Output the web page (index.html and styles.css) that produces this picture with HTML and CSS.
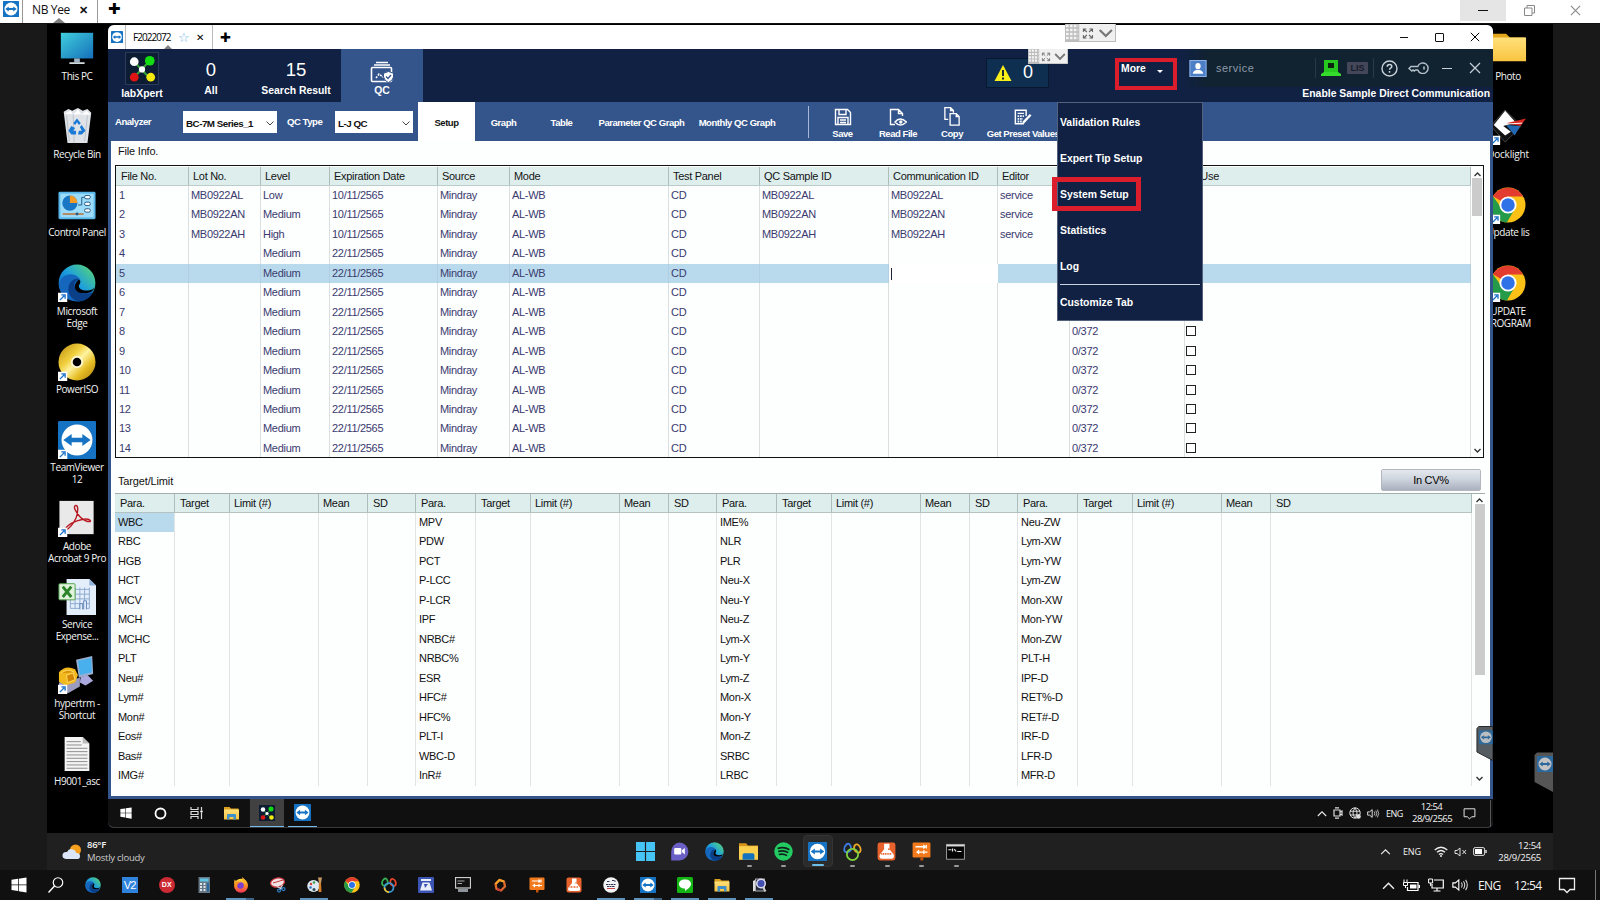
FILE: index.html
```html
<!DOCTYPE html>
<html lang="en">
<head>
<meta charset="utf-8">
<title>NB Yee</title>
<link rel="stylesheet" href="styles.css">
</head>
<body>
<svg class="defs" width="0" height="0">
  <defs>
    <linearGradient id="gEdge" x1="0" y1="1" x2="1" y2="0"><stop offset="0" stop-color="#0c50a8"/><stop offset=".5" stop-color="#1b9de0"/><stop offset="1" stop-color="#5fdc6a"/></linearGradient>
    <linearGradient id="gPc" x1="0" y1="0" x2="1" y2="1"><stop offset="0" stop-color="#40cfdc"/><stop offset="1" stop-color="#156fba"/></linearGradient>
    <linearGradient id="gFolder" x1="0" y1="0" x2="0" y2="1"><stop offset="0" stop-color="#ffe07a"/><stop offset="1" stop-color="#f9c440"/></linearGradient>
    <linearGradient id="gDisc" x1="0" y1="0" x2="1" y2="1"><stop offset="0" stop-color="#b98b12"/><stop offset=".35" stop-color="#f0cf3c"/><stop offset=".5" stop-color="#fff3a0"/><stop offset=".7" stop-color="#e6bd25"/><stop offset="1" stop-color="#a97c0c"/></linearGradient>
    <linearGradient id="gFire" x1="0" y1="0" x2="0" y2="1"><stop offset="0" stop-color="#ffdf3a"/><stop offset=".5" stop-color="#ff8a26"/><stop offset="1" stop-color="#f0305a"/></linearGradient>
  </defs>
  <symbol id="tv" viewBox="0 0 32 32"><rect width="32" height="32" rx="1" fill="#1673c4"/><circle cx="16" cy="16" r="13" fill="#fff"/><path d="M4.500 16l7-5v3.200h9V11l7 5-7 5v-3.200h-9V21z" fill="#1673c4"/></symbol>
  <symbol id="edge" viewBox="0 0 32 32"><circle cx="16" cy="16" r="15.500" fill="url(#gEdge)"/><path d="M1 17C2 8 13 6 18 12c1.500 2 .5 4-.5 5-2 3 2 6 6.500 6 3 0 5-.8 6-1.500C27 28 21 32 15 31 6 31 1 25 1 17z" fill="#1467bd"/><path d="M11 15c-5 6-1 15 6 16.500 5 .5 10-3 12.500-8C24 27 12 24 14 16c.7-2 2.500-3 4-3-2-1-5-.5-7 2z" fill="#0b3f88"/><path d="M17.500 13c3 2 0 4 0 6 1 4 8 4 12 2l1-1c-1 4-6 5-10 4.500-6-.5-9-6-3-11.500z" fill="#000"/></symbol>
  <symbol id="chrome" viewBox="0 0 32 32"><circle cx="16" cy="16" r="15.500" fill="#fbc116"/><path d="M16 16L2.600 8.200A15.500 15.500 0 0 1 29.400 8.500H16z" fill="#e33b2e"/><path d="M16 16l-5.500 3L2.600 8.200A15.500 15.500 0 0 0 15 31.500l7-12z" fill="#259a48"/><circle cx="16" cy="16" r="7.600" fill="#fff"/><circle cx="16" cy="16" r="6" fill="#2f72e8"/></symbol>
  <symbol id="lab" viewBox="0 0 32 32"><rect width="32" height="32" fill="#0c1c33"/><path d="M8 9l15 16M24 8L8 25" stroke="#3aa23a" stroke-width="2"/><circle cx="8" cy="9" r="4.500" fill="#fff"/><circle cx="24" cy="8" r="5" fill="#12dc12"/><circle cx="8" cy="25" r="4.500" fill="#e01414"/><circle cx="25" cy="25" r="4.500" fill="#f4ea0c"/><circle cx="16" cy="17" r="3.200" fill="#fff"/></symbol>
  <symbol id="folder" viewBox="0 0 32 32"><path d="M1 4h11l3 3h15v5H1z" fill="#d9a021"/><path d="M1 9h30v20H1z" fill="url(#gFolder)"/><path d="M7 29v-9q0-2 2-2h14q2 0 2 2v9h-5v-5h-8v5z" fill="#3f8fc8"/></symbol>
  <symbol id="win10" viewBox="0 0 32 32"><path d="M1 5.500L14 3.700V15H1zM15.500 3.500L31 1v14H15.500zM1 16.500h13v11.300L1 26zM15.500 16.500H31V31l-15.500-2.300z" fill="#fff"/></symbol>
  <symbol id="arrow" viewBox="0 0 10 10"><rect width="10" height="10" fill="#fff"/><path d="M2 8l4.500-4.500M3.500 2.500h4v4" stroke="#1b70c8" stroke-width="1.400" fill="none"/></symbol>
  <symbol id="flask" viewBox="0 0 32 32"><rect x="1" y="1" width="30" height="30" rx="4" fill="#e8622c"/><path d="M12 3h9v9l7 9q2 7-4 7H9q-7 0-4-7l7-9z" fill="#fff"/><path d="M7 20h18" stroke="#e8622c" stroke-width="3" stroke-dasharray="2 1"/><circle cx="20" cy="12" r="1.500" fill="#e8622c"/></symbol>
  <symbol id="sign" viewBox="0 0 32 32"><rect x="1" y="1" width="30" height="25" rx="2" fill="#f27a1c"/><path d="M14 26h5v5h-5z" fill="#c65008"/><path d="M6 8h16l-3-3m3 3l-3 3M26 17H9l3-3m-3 3l3 3M24 5v6M20 14v6" stroke="#fff" stroke-width="2.200" fill="none"/></symbol>
  <symbol id="loops" viewBox="0 0 32 32"><g fill="none" stroke-width="3"><path d="M13 14C8 19 2 18 2 12S8 1 11 4s3 6 2 10z" stroke="#3c7be0"/><path d="M19 13c-1-6 1-10 5-9s7 8 5 12-8 1-10-3z" stroke="#f1a82a"/><circle cx="16" cy="21" r="9.500" stroke="#7ed23e"/></g></symbol>
  <symbol id="speaker" viewBox="0 0 20 16"><path d="M1 5.500h3L8 2v12l-4-3.500H1z" fill="none" stroke="#fff" stroke-width="1.300"/><path d="M11 5q2 3 0 6M13.500 3.500q3 4.500 0 9M16 2q4 6 0 12" fill="none" stroke="#ddd" stroke-width="1.200"/></symbol>
  <symbol id="chev" viewBox="0 0 12 8"><path d="M1 7l5-5 5 5" fill="none" stroke="#eee" stroke-width="1.300"/></symbol>
  <symbol id="note" viewBox="0 0 18 18"><path d="M1.500 2.500h15v11H12L9 16.500l-3-3H1.500z" fill="none" stroke="#eee" stroke-width="1.300"/></symbol>
  <symbol id="x" viewBox="0 0 12 12"><path d="M1 1l10 10M11 1L1 11" fill="none" stroke="currentColor" stroke-width="1.200"/></symbol>
  <symbol id="grip" viewBox="0 0 50 18"><rect width="50" height="18" fill="#f0f0f0"/><path d="M0 17.500h50M49.500 0v18" stroke="#bbb"/><rect width="14" height="18" fill="#bcbcbc"/><path d="M1 2h12M1 6h12M1 10h12M1 14h12" stroke="#f4f4f4" stroke-width="2.600" stroke-dasharray="2.600 1.200"/><path d="M18 8V5h3M18 5l3.500 3M27 8V5h-3M27 5l-3.500 3M18 11v3h3M18 14l3.500-3M27 11v3h-3M27 14l-3.500-3" fill="none" stroke="#666"/><path d="M34 6l6 6 6-6" fill="none" stroke="#777" stroke-width="2.200"/></symbol>
</svg>

<header class="top">
  <svg class="top-logo"><use href="#tv"/></svg>
  <div class="top-tab"><span>NB Yee</span><b>✕</b></div>
  <b class="plus">✚</b>
  <div class="top-controls">
    <div class="ctl ctl-hot"><i class="dash"></i></div>
    <div class="ctl"><svg width="11" height="11" viewBox="0 0 11 11"><path d="M.5 3h7.500v7.500H.5zM3 3V.5h7.500V8H8" fill="none" stroke="#888"/></svg></div>
    <div class="ctl"><svg width="11" height="11"><use href="#x"/></svg></div>
  </div>
</header>

<main class="desktop">
  <section class="shortcuts left">
    <div class="sc"><svg viewBox="0 0 40 40"><rect x="3" y="4" width="34" height="27" fill="url(#gPc)"/><path d="M17 31h6v4h-6z" fill="#9fb4c4"/><path d="M12 35h16v1.800H12z" fill="#dbe4ea"/></svg><span>This PC</span></div>
    <div class="sc"><svg viewBox="0 0 40 40"><path d="M6 5l5-3 4 2 6-3 5 3 5-2 4 4-4 32H10z" fill="#dfe3e8"/><path d="M7 7l6-3 3 4 5-5 4 5 5-4 4 4z" fill="#fff"/><path d="M9 9l3 27M31 9l-3 27M16 8l1 30" stroke="#b9c1ca"/><path d="M16 17l4-5 4 5-2 2-2-3-2 3zM25 19l4 6-4 4h-4l1-4h3l-2-4zM14 20l-3 5 3 4h5v-4h-3l2-3z" fill="#1b7ad6"/></svg><span>Recycle Bin</span></div>
    <div class="sc"><svg viewBox="0 0 40 40"><rect x=".5" y="6" width="39" height="29" rx="1.500" fill="#58b6e8"/><rect x="2.500" y="8" width="35" height="25" fill="#9cdcf8"/><circle cx="12.500" cy="18" r="8" fill="#1976c4"/><path d="M12.500 18v-8a8 8 0 0 1 8 8z" fill="#f49b26"/><path d="M21 20h4v-8h4" stroke="#245a84" fill="none"/><g fill="#fff" stroke="#245a84"><rect x="28" y="10" width="6" height="3.500" rx="1.500"/><rect x="28" y="17" width="6" height="3.500" rx="1.500"/><rect x="28" y="24" width="6" height="3.500" rx="1.500"/></g><path d="M5 29.500h22" stroke="#b96d2a" stroke-width="1.500"/><circle cx="20" cy="29.500" r="1.500" fill="#245a84"/></svg><span>Control Panel</span></div>
    <div class="sc"><svg viewBox="0 0 40 40"><use href="#edge" width="40" height="40"/><use href="#arrow" y="30" width="10" height="10"/></svg><span>Microsoft<br>Edge</span></div>
    <div class="sc"><svg viewBox="0 0 40 40"><circle cx="20" cy="20" r="19.500" fill="url(#gDisc)"/><circle cx="20" cy="20" r="6.500" fill="#fff8d0"/><circle cx="20" cy="20" r="4.500" fill="#000"/><use href="#arrow" y="30" width="10" height="10"/></svg><span>PowerISO</span></div>
    <div class="sc"><svg viewBox="0 0 40 40"><use href="#tv" width="40" height="40"/><use href="#arrow" y="30" width="10" height="10"/></svg><span>TeamViewer<br>12</span></div>
    <div class="sc"><svg viewBox="0 0 40 40"><rect x="1.500" y="2" width="36" height="35" fill="#e9e9e9"/><path d="M18 7c4-2 3 8 1 13-3 6-7 11-10 12-3 0 2-6 11-9s13-2 14 0-9 1-15-10c-2-3-2-5-1-6z" fill="none" stroke="#b81922" stroke-width="1.500"/><use href="#arrow" y="30" width="10" height="10"/></svg><span>Adobe<br>Acrobat 9 Pro</span></div>
    <div class="sc"><svg viewBox="0 0 40 40"><path d="M9 1h24l7 7v31H9z" fill="#e4eefb"/><path d="M33 1l7 7h-7z" fill="#8fb0d8"/><path d="M13 12h20M13 17h20M13 22h20M13 27h20M13 32h20M13 10v22M18 10v22M23 10v22M28 10v22M33 10v22" stroke="#8aa9cf"/><path d="M23 33v-6h3v6M27 33v-9h3v9" stroke="#6689b8" fill="#dce8f8"/><rect x="1" y="6" width="17" height="17" rx="1" fill="#e0f2dc" stroke="#52a24c"/><path d="M5 9l9 11M14 9L5 20" stroke="#2b8429" stroke-width="3"/></svg><span>Service<br>Expense...</span></div>
    <div class="sc"><svg viewBox="0 0 40 40"><path d="M19 4l17-4 1 19-15 4z" fill="#9aaed0"/><path d="M21 5l14-3 .5 15L23 20z" fill="#49b0ee"/><path d="M24 22l7-2 6 6-8 5-6-3z" fill="#aaa8dc"/><path d="M1 28l22-5v9l-12 7-10-2z" fill="#9b9cc0"/><path d="M1 17q7-8 17-3l3 6-3 8-10 3-7-4z" fill="#f2b91d"/><path d="M3 18q7-5 14-1M9 20l7-2 2 7-8 3z" fill="#d18705" stroke="#ffdc65"/><use href="#arrow" y="30" width="10" height="10"/></svg><span>hypertrm -<br>Shortcut</span></div>
    <div class="sc"><svg viewBox="0 0 40 40"><path d="M7 2h19l7 7v29H7z" fill="#f4f4f4"/><path d="M26 2l7 7h-7z" fill="#bbb"/><path d="M9 7h15M9 10.500h16M9 14h22M9 17.500h22M9 21h22M9 24.500h22M9 28h22M9 31.500h22M9 35h22" stroke="#8a8a8a"/></svg><span>H9001_asc</span></div>
  </section>

  <section class="shortcuts right">
    <div class="sc"><svg viewBox="0 0 40 40"><path d="M2 5h16l4 4h16v6H2z" fill="#e2a61c"/><path d="M2 9h37v25H2z" fill="url(#gFolder)"/></svg><span>Photo</span></div>
    <div class="sc wide"><svg viewBox="0 0 40 40"><path d="M17 3l17 17-17 17L2 20z" fill="#111" stroke="#444"/><path d="M17 4l11 12-13 4 8 6-6 4L5 19z" fill="#fff"/><path d="M18 17l21-5-6 8z" fill="#d7281f"/><path d="M18 19l15 1-6 10z" fill="#2268b2"/><path d="M17 18l18-1" stroke="#fff"/><use href="#arrow" y="30" x="2" width="10" height="10"/></svg><span>Docklight</span></div>
    <div class="sc"><svg viewBox="0 0 40 40"><use href="#chrome" x="1" y="1" width="38" height="38"/><use href="#arrow" y="30" x="2" width="10" height="10"/></svg><span>Update lis</span></div>
    <div class="sc"><svg viewBox="0 0 40 40"><use href="#chrome" x="1" y="1" width="38" height="38"/><use href="#arrow" y="30" x="2" width="10" height="10"/></svg><span>UPDATE<br>PROGRAM</span></div>
  </section>

  <section class="window">
    <div class="tabs">
      <svg class="tabs-logo"><use href="#tv"/></svg>
      <div class="tabs-tab"><span>F2022072</span><em>☆</em><b>✕</b></div>
      <b class="plus small">✚</b>
      <div class="win-controls"><i class="dash"></i><i class="box"></i><svg width="10" height="10"><use href="#x"/></svg></div>
    </div>

    <div class="head">
      <div class="brand"><svg><use href="#lab"/></svg><b>labXpert</b></div>
      <div class="stat all"><span>0</span><b>All</b></div>
      <div class="stat found"><span>15</span><b>Search Result</b></div>
      <div class="stat qc">
        <svg viewBox="0 0 24 22"><path d="M6 1.500h12M4 4h16" stroke="#fff" stroke-width="1.400"/><rect x="1.500" y="6.500" width="20" height="14" rx="1" fill="none" stroke="#fff" stroke-width="1.600"/><path d="M6 17l3-4 4 3 4-5" fill="none" stroke="#fff" stroke-dasharray="2 1.200" stroke-width="1.600"/><path d="M18.500 10.500l5 1.800v3.700q-1 4-5 5.500-4-1.500-5-5.500v-3.700z" fill="#fff" stroke="#34558b"/><path d="M16 15.500l2 2 3-3.500" fill="none" stroke="#34558b" stroke-width="1.300"/></svg>
        <b>QC</b></div>
      <div class="alert"><svg width="18" height="18" viewBox="0 0 18 18"><path d="M9 1l8.500 16H.5z" fill="#f8f018"/><path d="M9 6v6M9 13.500V15.500" stroke="#1b2a30" stroke-width="2"/></svg><span>0</span></div>
      <div class="more"><b>More</b><i></i></div>
      <div class="account">
        <div class="account-row">
          <svg class="user" viewBox="0 0 18 18"><rect width="18" height="18" fill="#4c7fc6"/><rect x=".5" y=".5" width="17" height="17" fill="none" stroke="#8fb3e6"/><ellipse cx="9" cy="6.500" rx="2.800" ry="3.300" fill="#fff"/><path d="M3.500 14.500q0-3 4-4h3q4 1 4 4z" fill="#fff"/></svg>
          <span class="uname">service</span>
          <div class="status">
            <svg width="20" height="17" viewBox="0 0 20 17"><path d="M3 0h14v12H3z" fill="#27c81f"/><path d="M7 3h6v5H7z" fill="#0d2410"/><path d="M0 14l3-2h14l3 2v2H0z" fill="#35dc2c"/></svg>
            <span class="lis">LIS</span><i class="bar"></i>
            <svg width="17" height="17" viewBox="0 0 17 17"><circle cx="8.500" cy="8.500" r="7.500" fill="none" stroke="#c8d0d8" stroke-width="1.400"/><path d="M6.200 6.800q0-2.300 2.300-2.300t2.300 2q0 1-1.200 1.700-1.100.7-1.100 1.600M8.500 11v1.800" fill="none" stroke="#c8d0d8" stroke-width="1.500"/></svg>
            <svg width="21" height="12" viewBox="0 0 21 12"><path d="M9.800 4.500A5.300 5.300 0 1 1 9.800 8H7.500l-1.200 1-1.200-1-1.200 1-1.200-1-1.700-1.600L3 4.500z" fill="none" stroke="#b4c0ca" stroke-width="1.400"/><path d="M16 4.500v3" stroke="#b4c0ca" stroke-width="1.600"/></svg>
            <i class="dash light"></i><svg class="lx" width="12" height="12"><use href="#x"/></svg>
          </div>
        </div>
        <b class="direct">Enable Sample Direct Communication</b>
      </div>
    </div>

    <div class="tools">
      <b class="lbl-an">Analyzer</b>
      <div class="select s1"><b>BC-7M Series_1</b><svg width="8" height="5" viewBox="0 0 8 5"><path d="M.5.5L4 4 7.500.5" fill="none" stroke="#444"/></svg></div>
      <b class="lbl-qc">QC Type</b>
      <div class="select s2"><b>L-J QC</b><svg width="8" height="5" viewBox="0 0 8 5"><path d="M.5.5L4 4 7.500.5" fill="none" stroke="#444"/></svg></div>
      <nav><b class="on">Setup</b><b class="t2">Graph</b><b class="t3">Table</b><b class="t4">Parameter QC Graph</b><b class="t5">Monthly QC Graph</b></nav>
      <i class="rule"></i>
      <div class="act a1"><svg viewBox="0 0 18 18"><path d="M1.500 1.500h12l3 3v12h-15zM5 1.500v5h7v-5M4 16.500v-7h10v7M6 12h6M6 14.500h6" fill="none" stroke="#fff" stroke-width="1.400"/></svg><b>Save</b></div>
      <div class="act a2"><svg viewBox="0 0 18 18"><path d="M6 16.500H1.500v-15h8l4 4V8M9.500 1.500v4h4M6 14q5-6 11.500 0-6.500 6-11.500 0z" fill="none" stroke="#fff" stroke-width="1.400"/><circle cx="11.800" cy="14" r="1.700" fill="#fff"/></svg><b>Read File</b></div>
      <div class="act a3"><svg viewBox="0 0 18 20"><path d="M5 13H1.500V.7h6l3 3V6M7.500.7v3h3M7 7h6.500l3 3v9H7zM13.500 7v3h3" fill="none" stroke="#fff" stroke-width="1.400"/></svg><b>Copy</b></div>
      <div class="act a4"><svg viewBox="0 0 20 18"><path d="M11 16.500H1.500v-15h12V8M4 5h7" fill="none" stroke="#fff" stroke-width="1.600"/><path d="M4 8h7M4 11h6M4 14h5" stroke="#fff" stroke-width="2" stroke-dasharray="1.800 1"/><path d="M10 15.500l8.500-9" stroke="#fff" stroke-width="2.600"/></svg><b>Get Preset Values</b></div>
    </div>

    <div class="body">
      <div class="caption">File Info.</div>
      <div class="files"><div class="grid" id="files"></div>
        <div class="scroll"><svg width="7" height="5" viewBox="0 0 7 5"><path d="M.5 4l3-3 3 3" fill="none" stroke="#333" stroke-width="1.400"/></svg><i class="thumb short"></i><svg class="down" width="7" height="5" viewBox="0 0 7 5"><path d="M.5 1l3 3 3-3" fill="none" stroke="#333" stroke-width="1.400"/></svg></div>
      </div>
      <div class="limit-bar"><span>Target/Limit</span><button>In CV%</button></div>
      <div class="limits"><div class="groups" id="limits"></div>
        <div class="scroll"><svg width="7" height="5" viewBox="0 0 7 5"><path d="M.5 4l3-3 3 3" fill="none" stroke="#333" stroke-width="1.400"/></svg><i class="thumb long"></i><svg class="down" width="7" height="5" viewBox="0 0 7 5"><path d="M.5 1l3 3 3-3" fill="none" stroke="#333" stroke-width="1.400"/></svg></div>
      </div>
    </div>

    <div class="taskbar inner">
      <div class="ti"><svg width="12" height="12"><use href="#win10"/></svg></div>
      <div class="ti"><svg width="13" height="13" viewBox="0 0 13 13"><circle cx="6.500" cy="6.500" r="5" fill="none" stroke="#fff" stroke-width="1.800"/></svg></div>
      <div class="ti"><svg width="13" height="12" viewBox="0 0 13 12"><path d="M1 0v2.500h7V0M1 12V9.500h7V12M1 4.500h7v3H1zM11.500 0v3M11.500 6v6" fill="none" stroke="#ddd" stroke-width="1.200"/><circle cx="11.500" cy="4.500" r="1.200" fill="#fff"/></svg></div>
      <div class="ti"><svg width="17" height="16"><use href="#folder"/></svg></div>
      <div class="ti active"><svg width="16" height="16"><use href="#lab"/></svg></div>
      <div class="ti running"><svg width="17" height="17"><use href="#tv"/></svg></div>
      <div class="tray-inner">
        <svg width="10" height="7"><use href="#chev"/></svg>
        <svg width="10" height="12" viewBox="0 0 10 12"><path d="M1 3h6v6H1zM7 5l2-1v4L7 7M2 .8h4M2 11.200h4" fill="none" stroke="#ddd" stroke-width="1.200"/></svg>
        <svg width="12" height="12" viewBox="0 0 12 12"><circle cx="6" cy="6" r="5.200" fill="none" stroke="#ddd"/><path d="M1 4.200h10M1 8h10M6 1q-4 5 0 10M6 1q4 5 0 10" fill="none" stroke="#ddd"/><circle cx="9.500" cy="9.500" r="2.300" fill="#ddd"/></svg>
        <svg width="13" height="11"><use href="#speaker"/></svg>
        <span class="eng">ENG</span>
        <div class="clock">12:54<br>28/9/2565</div>
        <svg width="13" height="13"><use href="#note"/></svg><i class="edge"></i>
      </div>
    </div>

    <svg class="grip-small" viewBox="0 0 50 18" preserveAspectRatio="none"><use href="#grip"/></svg>
    <div class="menu"><b>Validation Rules</b><b>Expert Tip Setup</b><b>System Setup</b><b>Statistics</b><b>Log</b><hr><b>Customize Tab</b></div>
    <svg class="side-tab" viewBox="0 0 18 38"><path d="M3 1h15v36L1 28V3z" fill="#555d63" stroke="#222"/><use href="#tv" x="3" y="5" width="15" height="15" opacity=".6"/></svg>
  </section>

  <svg class="grip-big" viewBox="0 0 50 18" preserveAspectRatio="none"><use href="#grip"/></svg>
  <svg class="side-tab outer" viewBox="0 0 19 41"><path d="M3 .5h16V40L.5 30V3z" fill="#555"/><use href="#tv" x="3" y="4" width="16" height="16" opacity=".65"/></svg>
  <div class="mark mark-more"></div>
  <div class="mark mark-setup"></div>

  <section class="taskbar middle">
    <div class="weather"><svg width="20" height="16" viewBox="0 0 20 16"><circle cx="13.500" cy="6" r="5.500" fill="#f7a01e"/><path d="M4 15q-4-.5-3.500-4T5 8q2-4 6-2.500 3 1 3 3.500 4-.5 4 3t-3 3z" fill="#dbe7f8"/></svg><div><b>86°F</b><span>Mostly cloudy</span></div></div>
    <div class="apps">
      <div class="ap"><svg viewBox="0 0 32 32"><path d="M0 0h15v15H0zM17 0h15v15H17zM0 17h15v15H0zM17 17h15v15H17z" fill="#45c4f5"/></svg></div>
      <div class="ap"><svg viewBox="0 0 32 32"><path d="M16 1a15 15 0 1 1 0 30H2V16A15 15 0 0 1 16 1z" fill="#6a5fc4"/><rect x="7" y="10" width="12" height="11" rx="2" fill="#fff"/><path d="M20 14l5-4v11l-5-4z" fill="#fff"/></svg></div>
      <div class="ap"><svg><use href="#edge"/></svg></div>
      <div class="ap dot"><svg viewBox="0 0 32 32"><path d="M0 2h12l3 4h17v5H0z" fill="#d9951a"/><path d="M0 7h32v23H0z" fill="#fbd04e"/><path d="M6 30v-8q0-3 3-3h14q3 0 3 3v8z" fill="#1272be"/></svg></div>
      <div class="ap dot"><svg viewBox="0 0 32 32"><circle cx="16" cy="16" r="15.500" fill="#23cc62"/><path d="M6 11q11-4 20 2M7 16q10-3 17 2M8 21q8-2 14 2" fill="none" stroke="#10231a" stroke-width="2.800"/></svg></div>
      <div class="ap dot sel"><svg><use href="#tv"/></svg></div>
      <div class="ap dot"><svg><use href="#loops"/></svg></div>
      <div class="ap dot"><svg><use href="#flask"/></svg></div>
      <div class="ap dot"><svg><use href="#sign"/></svg></div>
      <div class="ap dot"><svg viewBox="0 0 32 32"><rect x="1" y="4" width="30" height="25" fill="#050505" stroke="#aaa" stroke-width="1.500"/><path d="M1 6h30" stroke="#ddd" stroke-width="3"/><path d="M4 13h5M11 11v5M14 12l3 4M19 16h7" stroke="#eee" stroke-width="2"/></svg></div>
    </div>
    <div class="tray-mid">
      <svg width="11" height="7"><use href="#chev"/></svg><span>ENG</span>
      <svg class="wifi" width="14" height="11" viewBox="0 0 14 11"><path d="M.7 4q6.300-5.500 12.600 0M3 6.300q4-3.500 8 0M5 8.500q2-1.700 4 0" fill="none" stroke="#eee" stroke-width="1.300"/><circle cx="7" cy="10" r="1" fill="#eee"/></svg>
      <svg width="13" height="10" viewBox="0 0 13 10"><path d="M1 3.500h2l3-2.500v8L3 6.500H1zM8.500 3l3.500 4M12 3L8.500 7" fill="none" stroke="#ddd"/></svg>
      <svg width="14" height="9" viewBox="0 0 14 9"><rect x=".6" y=".6" width="11" height="7.800" rx="1.500" fill="none" stroke="#ddd"/><rect x="2" y="2" width="7" height="5" fill="#fff"/><path d="M13 3v3" stroke="#ddd" stroke-width="1.500"/></svg>
      <div class="clock r">12:54<br>28/9/2565</div>
    </div>
  </section>
</main>

<footer class="taskbar bottom">
  <div class="bi"><svg><use href="#win10"/></svg></div>
  <div class="bi"><svg viewBox="0 0 32 32"><circle cx="20" cy="11" r="9.500" fill="none" stroke="#fff" stroke-width="2.400"/><path d="M13 18L1 31" stroke="#fff" stroke-width="2.800"/></svg></div>
  <div class="bi"><svg><use href="#edge"/></svg></div>
  <div class="bi"><div class="tile vq">V2</div></div>
  <div class="bi"><div class="tile dx">DX</div></div>
  <div class="bi"><svg viewBox="0 0 32 32"><rect x="5" y="0" width="23" height="32" fill="#667885"/><rect x="8" y="3" width="17" height="6" fill="#5ec4e6"/><path d="M8 14h11M8 20h11M8 26h11" stroke="#dce4ea" stroke-width="4" stroke-dasharray="4 3"/><path d="M22 12h4v17h-4z" fill="#2369a6"/></svg></div>
  <div class="bi run two"><svg viewBox="0 0 32 32"><circle cx="16" cy="17.500" r="14" fill="url(#gFire)"/><path d="M18 0q8 6 10 11l-8-1zM3 5l5 5-6 4z" fill="#ffb52c"/><circle cx="15" cy="17" r="6.500" fill="#7b3fd0"/><path d="M4 11q7-3 10 1-6 1-5 5z" fill="#ff8a26"/></svg></div>
  <div class="bi"><svg viewBox="0 0 32 32"><ellipse cx="15" cy="11" rx="14" ry="9" fill="#f0e3e4" stroke="#c8323c" stroke-width="2.500" transform="rotate(-12 15 11)"/><path d="M6 12l20-6" stroke="#c8323c" stroke-width="2"/><path d="M14 19l10 5M25 16l-6 10" stroke="#d7dbe0" stroke-width="2.500"/><circle cx="18" cy="27" r="3" fill="none" stroke="#2f7cc4" stroke-width="2.500"/><circle cx="27" cy="24" r="3" fill="none" stroke="#2f7cc4" stroke-width="2.500"/></svg></div>
  <div class="bi run"><svg viewBox="0 0 32 32"><ellipse cx="13" cy="18" rx="12.500" ry="12" fill="#dce9f2"/><circle cx="8" cy="14" r="2.500" fill="#d6402f"/><circle cx="14" cy="11" r="2.500" fill="#3b9d46"/><circle cx="7" cy="21" r="2.500" fill="#2e74c6"/><circle cx="14" cy="25" r="3" fill="#34464f"/><path d="M22 1h8l-2 11h-4z" fill="#c49a62"/><path d="M24 12h4l1 18h-6z" fill="#d57e28"/></svg></div>
  <div class="bi"><svg><use href="#chrome"/></svg></div>
  <div class="bi"><svg viewBox="0 0 32 32"><g fill="none" stroke-width="3.500"><path d="M13 14C8 19 2 18 2 12S8 1 11 4s3 6 2 10z" stroke="#36b255"/><path d="M19 13c-1-6 1-10 5-9s7 8 5 12-8 1-10-3z" stroke="#e8462f"/><circle cx="16" cy="21" r="9" stroke="#3b9ad8"/><path d="M7 21a9 9 0 0 0 9 9" stroke="#f0c02c"/></g></svg></div>
  <div class="bi"><svg viewBox="0 0 32 32"><rect width="32" height="32" rx="2" fill="#3c55b4"/><path d="M6 4h20v4H6zM9 11h14l5 16H4z" fill="#e9eefb"/><path d="M12 14h8l-6 8z" fill="#3c55b4"/></svg></div>
  <div class="bi"><svg viewBox="0 0 32 32"><rect x="1" y="1" width="30" height="21" fill="#111" stroke="#ccc" stroke-width="2.500"/><path d="M5 8h14M5 13h9" stroke="#aaa" stroke-width="2"/><path d="M6 24h20v6H6z" fill="#8d949b"/></svg></div>
  <div class="bi"><svg viewBox="0 0 32 32"><path d="M7 14l8-8 9 3 2 10-8 8-9-3z" fill="none" stroke="#e06a2c" stroke-width="4.500"/><path d="M7 14l8-8 9 3" fill="none" stroke="#f4a52a" stroke-width="4"/><path d="M10 24l8 3" stroke="#c93d3d" stroke-width="4"/></svg></div>
  <div class="bi"><svg><use href="#sign"/></svg></div>
  <div class="bi"><svg><use href="#flask"/></svg></div>
  <div class="bi run"><svg viewBox="0 0 32 32"><circle cx="16" cy="16" r="15.500" fill="#f4f4f6"/><path d="M8 9h6M18 7h6v4M6 15h20M8 19h16" stroke="#2d3550" stroke-width="2" stroke-dasharray="4 1" fill="none"/><path d="M8 23h16" stroke="#c44" stroke-width="2"/></svg></div>
  <div class="bi run two"><svg><use href="#tv"/></svg></div>
  <div class="bi run"><svg viewBox="0 0 32 32"><rect width="32" height="32" rx="3" fill="#14b414"/><path d="M16 5c8 0 12 4 12 9 0 6-7 10-12 14v-5C8 23 4 19 4 14s4-9 12-9z" fill="#fff"/></svg></div>
  <div class="bi run"><svg><use href="#folder"/></svg></div>
  <div class="bi run"><svg viewBox="0 0 32 32"><path d="M4 8l6-3v22l-6 2z" fill="#ddd"/><rect x="9" y="4" width="18" height="24" fill="#222a3c" stroke="#aaa" stroke-width="2"/><circle cx="20" cy="13" r="8.500" fill="#4450b0" stroke="#dde" stroke-width="3"/><path d="M24 20l5 9" stroke="#ccc" stroke-width="4"/></svg></div>
  <div class="tray-bot">
    <svg width="13" height="9"><use href="#chev"/></svg>
    <svg width="17" height="13" viewBox="0 0 17 13"><path d="M5 3.500h10v8H4.500V8" fill="none" stroke="#fff" stroke-width="1.200"/><path d="M7 5.500h6.500v4H7zM15.500 6h1.500v3h-1.500z" fill="#fff"/><path d="M1 .5v3M4 .5v3M.5 3.500h4v3h-4zM2.500 6v3" fill="none" stroke="#fff"/></svg>
    <svg width="16" height="14" viewBox="0 0 16 14"><path d="M6 2h9.300v8H4V6M9 10v3M5.500 13h7" fill="none" stroke="#fff" stroke-width="1.200"/><path d="M.6 1h4v4h-4zM2.600 5v3" fill="none" stroke="#fff"/></svg>
    <svg width="17" height="14"><use href="#speaker"/></svg>
    <span class="e">ENG</span><span class="c">12:54</span>
    <svg width="18" height="18"><use href="#note"/></svg><i></i>
  </div>
</footer>
<script src="app.js"></script>
</body>
</html>
```

FILE: styles.css
```css
* { box-sizing: border-box; }
body { margin: 0; width: 1600px; height: 900px; overflow: hidden; background: #191919; font-family: "Liberation Sans", Arial, sans-serif; font-size: 11px; display: flex; flex-direction: column; }
svg { display: block; flex: none; }
.defs { position: absolute; }
i { display: block; font-style: normal; }

/* outer session bar */
.top { height: 24px; flex: none; background: #fff; display: flex; align-items: center; border-bottom: 1px solid #111; padding-left: 3px; }
.top-logo { width: 16px; height: 16px; margin-bottom: 6px; }
.top-tab { display: flex; align-items: center; gap: 9px; width: 76px; height: 23px; margin-left: 3px; padding: 0 0 5px 9px; border: solid #999; border-width: 0 1px; font: 12px "Open Sans", sans-serif; letter-spacing: -.35px; white-space: nowrap; position: relative; color: #111; }
.top-tab b { font-size: 11px; }
.top-tab::after, .tabs-tab::after { content: ""; position: absolute; left: 30px; bottom: 0; border: 6px solid transparent; border-top: 0; border-bottom: 5px solid #808080; }
.plus { margin-left: 10px; margin-bottom: 6px; font: 15px "DejaVu Sans", sans-serif; }
.top-controls { display: flex; margin-left: auto; height: 23px; padding-right: 2px; }
.ctl { width: 46px; height: 21px; display: flex; align-items: center; justify-content: center; color: #888; }
.ctl-hot { background: #e5e5e5; }
.dash { width: 10px; height: 1px; background: #111; }

/* remote desktop */
.desktop { position: relative; width: 1506px; height: 846px; flex: none; margin-left: 47px; background: #000; }
.shortcuts { position: absolute; top: 5px; width: 74px; display: flex; flex-direction: column; }
.shortcuts.left { left: -7px; }
.shortcuts.right { left: 1424px; }
.sc { height: 78.4px; flex: none; display: flex; flex-direction: column; align-items: center; color: #f4f4f4; font: 10px/12px "Open Sans", sans-serif; letter-spacing: -.42px; text-align: center; white-space: nowrap; }
.sc svg { width: 38px; height: 38px; }
.sc span { margin-top: 2.500px; }
.wide { letter-spacing: -.2px; }

.window { position: absolute; left: 61px; top: 1px; width: 1385px; height: 803px; border-radius: 6px; background: #34558b; display: flex; flex-direction: column; }
.tabs { height: 24px; background: #fff; border-radius: 6px 6px 0 0; display: flex; align-items: center; padding-left: 3px; flex: none; }
.tabs-logo { width: 12px; height: 12px; }
.tabs-tab { position: relative; margin-left: 2px; width: 88px; height: 24px; padding-left: 7px; display: flex; align-items: center; border: solid #bbb; border-width: 0 1px; font: 10px "Open Sans", sans-serif; letter-spacing: -.95px; }
.tabs-tab span { width: 38px; }
.tabs-tab::after { left: 38px; border-width: 0 4px 4px; }
.tabs-tab em { margin-left: 7px; width: 12px; font: 13px "DejaVu Sans", sans-serif; color: #6fb1e8; }
.tabs-tab b { margin-left: 6px; font: 10px "DejaVu Sans", sans-serif; font-weight: bold; }
.plus.small { margin: 0 0 0 7px; font-size: 13px; }
.win-controls { margin-left: auto; display: flex; align-items: center; padding-right: 13px; }
.win-controls .dash { width: 8px; margin-right: 27px; }
.win-controls .box { width: 9px; height: 9px; border: 1px solid #111; margin-right: 26px; border-radius: 1px; }

.head { height: 53px; flex: none; background: #102143; color: #fff; display: flex; font-size: 10.400px; }
.brand { width: 68px; display: flex; flex-direction: column; align-items: center; padding-top: 4px; }
.brand svg { width: 32px; height: 31px; outline: 1px solid #2a3a58; }
.brand b { margin-top: 4px; }
.stat { display: flex; flex-direction: column; align-items: center; }
.stat span { font-size: 18.500px; line-height: 20px; margin-top: 11px; }
.stat b { line-height: 12px; margin-top: 5px; }
.all { width: 70px; }
.found { width: 95px; padding-left: 5px; }
.found b { white-space: nowrap; }
.qc { width: 82px; background: #34558b; }
.qc svg { width: 24px; height: 22px; margin: 12px 0 2px; }
.stat.qc b { margin-top: 0; }
.alert { width: 63px; height: 30px; margin: 9px 0 0 563px; background: #0e2f50; border: 1px solid #0a1730; display: flex; align-items: center; padding-left: 7px; }
.alert span { font-size: 18px; margin: -2px 0 0 11px; }
.more { display: flex; width: 135px; padding: 14px 0 0 72px; }
.more i { margin: 7px 0 0 11px; width: 0; height: 0; border: 3.500px solid transparent; border-top-color: #fff; border-bottom: 0; }
.account { flex: 1; display: flex; flex-direction: column; }
.account-row { height: 38px; background: linear-gradient(90deg, #11222f00, #112230 8%); display: flex; align-items: center; padding-left: 5px; }
.user { width: 18px; height: 17px; }
.uname { margin-left: 9px; color: #8e9aa8; font-size: 11px; letter-spacing: .5px; }
.status { margin-left: auto; display: flex; align-items: center; padding: 0 12px 0 5px; border-left: 1px solid #283848; height: 20px; color: #c8d0d8; }
.lis { margin-left: 6px; width: 21px; height: 12px; background: #444759; color: #171b2c; font: bold 9px/13px "Liberation Sans", sans-serif; text-align: center; border-radius: 1px; }
.bar { width: 1px; height: 20px; background: #2c3946; margin: 0 7px 0 5px; }
.status svg + svg { margin-left: 10px; }
.dash.light { background: #c8d0d8; margin: 0 17px 0 13px; }
.direct { align-self: flex-end; margin-right: 3px; line-height: 13px; }

.tools { height: 39px; flex: none; background: #34558b; color: #fff; display: flex; font-size: 10px; letter-spacing: -.45px; white-space: nowrap; position: relative; }
.lbl-an { margin: 14px 0 0 7px; width: 68px; font-size: 9.600px; letter-spacing: -.5px; }
.lbl-qc { margin: 14px 0 0 10px; width: 48px; font-size: 9.600px; letter-spacing: -.5px; }
.select { background: #fff; height: 22px; margin-top: 9px; color: #111; display: flex; align-items: center; justify-content: space-between; padding: 2px 3px 0; font-size: 9.800px; letter-spacing: -.5px; }
.s1 { width: 94px; } .s2 { width: 78px; }
nav { display: flex; width: 380px; margin-left: 5px; line-height: 42px; text-align: center; height: 39px; }
nav b { font-size: 9.500px; letter-spacing: -.45px; }
.on { width: 57px; background: #fff; color: #111; }
.t2 { width: 57px; } .t3 { width: 59px; } .t4 { width: 101px; } .t5 { width: 90px; }
.rule { width: 1px; height: 32px; background: #a7b9d6; margin: 4px 0 0 10px; }
.act { display: flex; flex-direction: column; align-items: center; padding-top: 6px; font-size: 9.500px; }
.act svg { width: 18px; height: 18px; }
.act b { line-height: 11px; margin-top: 2px; }
.a1 { width: 67px; } .a2 { width: 44px; } .a3 { width: 64px; } .a4 { width: 78px; }
.a3 svg { margin-top: -1px; height: 19px; }

/* content */
.body { height: 655px; flex: none; margin: 0 3px 3px; background: #fdfefe; padding: 0 6px 0 4px; color: #111; letter-spacing: -.3px; }
.caption { height: 24px; padding: 4px 0 0 3px; line-height: 13px; letter-spacing: -.2px; }
.files { height: 293px; border: 1px solid #111; display: flex; width: 1369px; overflow: hidden; }
.grid { width: 1355px; flex: none; }
.row { display: grid; grid-template-columns: 73px 72px 69px 108px 72px 159px 91px 129px 109px 72px 115px 286px; height: 19.460px; }
.row > div { border-right: 1px solid #dcdfe0; padding-left: 2px; line-height: 19px; color: #3a3a6e; white-space: nowrap; }
.row > div:first-child { padding-left: 3px; }
.row.h { height: 20px; background: #ddeeed; border-bottom: 1px solid #bccccb; border-top: 1px solid #fff; }
.row.h > div { padding-left: 4px; color: #151515; line-height: 18px; border-color: #aebcbb; }
.row.h > div:first-child { padding-left: 5px; }
.row.sel > div { background: #b9daec; border-color: #b1cfe0; }
.row.sel > div.edit { background: #fff; border-color: #fff; }
.caret { width: 1px; height: 12px; margin-top: 4px; background: #223; }
.check { width: 10px; height: 10px; border: 1px solid #222; margin: 4px 0 0 -1px; background: #fff; }
.scroll { width: 12px; display: flex; flex-direction: column; align-items: center; padding-top: 6px; }
.scroll .down { margin-top: auto; margin-bottom: 4px; }
.thumb { width: 10px; background: #cbcbcb; margin-top: 1px; flex: none; }
.short { height: 38px; } .long { height: 171px; }
.limit-bar { height: 35px; display: flex; justify-content: space-between; padding: 11px 3px 0 3px; align-items: flex-start; }
.limit-bar span { line-height: 25px; letter-spacing: -.15px; }
.limit-bar button { width: 100px; height: 22px; border: 1px solid #b3b7bd; border-radius: 2px; background: linear-gradient(#e4e8ee, #cfd5de 45%, #a9b1bf); font: 11px "Liberation Sans", sans-serif; letter-spacing: -.3px; padding: 0; }
.limits { display: flex; height: 293px; width: 1370px; border-top: 1px solid #a4aeae; }
.limits .scroll { padding-top: 4px; margin-left: 2px; }
.limits .scroll .down { margin-bottom: 5px; }
.groups { display: grid; grid-template-columns: 301px 301px 301px 454px; flex: none; }
.grp { display: grid; grid-template-columns: 60px 55px 89px 49px 1fr; grid-template-rows: 19px; grid-auto-rows: 19.480px; }
.grp > div { border-right: 1px solid #e2e4e4; padding-left: 3px; line-height: 19px; white-space: nowrap; }
.grp > .gh { background: #ddeeed; border-bottom: 1px solid #b4c3c2; border-right-color: #aebcbb; padding-left: 5px; }
.grp > .gh:nth-child(3), .grp > .gh:nth-child(4) { padding-left: 4px; }
.grp > .wbc { background: #b9daec; }

/* taskbars */
.taskbar { display: flex; align-items: center; color: #f4f4f4; font-family: "Open Sans", sans-serif; flex: none; }
.inner { height: 29px; background: #101010; border-bottom: 1px solid #3a3a3a; border-radius: 0 0 6px 6px; }
.ti { width: 35.300px; height: 28px; display: flex; align-items: center; justify-content: center; }
.active { background: #414141; border-bottom: 1px solid #76b9ed; width: 34px; margin-left: 1px; }
.running { width: 29px; margin-left: 4px; border-bottom: 1px solid #76b9ed; }
.tray-inner { margin-left: auto; display: flex; align-items: center; height: 28px; gap: 6px; font-size: 9px; letter-spacing: -.5px; }
.tray-inner .eng { width: 18px; }
.clock { font-size: 9.500px; line-height: 12px; text-align: center; letter-spacing: -.55px; width: 39px; }
.tray-inner .clock { margin: -1px 0 0 2px; }
.tray-inner .clock + svg { margin-left: 6px; }
.edge { width: 1px; height: 27px; background: #555; margin: 0 2px 0 8px; }
.middle { position: absolute; left: 0; top: 809px; width: 1506px; height: 37px; background: #202020; }
.weather { display: flex; align-items: center; padding-left: 15px; width: 581px; gap: 5px; font-size: 9.500px; line-height: 12.500px; letter-spacing: -.25px; }
.weather b, .weather span { display: block; }
.weather b { font-weight: 600; }
.weather span { color: #ccc; }
.apps { display: flex; }
.ap { width: 34.500px; height: 37px; display: flex; justify-content: center; align-items: center; position: relative; }
.ap svg { width: 19px; height: 19px; }
.dot::after { content: ""; position: absolute; left: 15px; bottom: 3px; width: 5px; height: 2px; border-radius: 1px; background: #999; }
.sel.ap { background: #2b2b2b; border: 1px solid #343434; border-radius: 4px; height: 32px; width: 30px; margin: 2px 2.250px 0; }
.sel.ap::after { left: 8px; width: 12px; bottom: 0; background: #6dbfe8; }
.tray-mid { margin-left: auto; display: flex; align-items: center; padding-right: 12px; font-size: 9px; gap: 6px; letter-spacing: -.2px; }
.tray-mid span { margin-left: 6px; width: 19px; }
.tray-mid .wifi { margin-left: 6px; }
.clock.r { text-align: right; width: 48px; font-size: 9.500px; letter-spacing: -.25px; }
.bottom { height: 30px; background: #101010; }
.bi { width: 37.050px; height: 30px; display: flex; justify-content: center; align-items: center; position: relative; flex: none; }
.bi svg { width: 16px; height: 16px; }
.run::after { content: ""; position: absolute; left: 4px; right: 5px; bottom: 0; height: 2px; background: #5d93bd; }
.two::after { box-shadow: inset -8px 0 #3d6487; }
.tile { width: 16px; height: 16px; color: #fff; font: 11px/16px "Liberation Sans", sans-serif; text-align: center; letter-spacing: -.8px; }
.vq { background: #2f83dc; } .dx { background: #cc2a35; border-radius: 50%; font-size: 7px; font-weight: bold; letter-spacing: 0; }
.tray-bot { margin-left: auto; display: flex; align-items: center; gap: 8px; font-size: 12px; letter-spacing: -.6px; }
.tray-bot .e { margin-left: 1px; width: 28px; }
.tray-bot .c { width: 36px; }
.tray-bot i { width: 1px; height: 30px; background: #777; margin: 0 4px 0 11px; }

/* overlays */
.menu { position: absolute; left: 949px; top: 77px; width: 146px; height: 219px; background: #102143; border: 1px solid #53627c; color: #fff; font-size: 10.400px; padding: 2px 2px 0; display: flex; flex-direction: column; }
.menu b { line-height: 36.200px; height: 36.100px; }
.menu hr { margin: -1px 0 0; width: 100%; height: 1px; border: 0; background: #c9d2e0; flex: none; }
.grip-big { position: absolute; left: 1018px; top: 0; width: 51px; height: 18px; }
.grip-small { position: absolute; left: 920px; top: 24px; width: 40px; height: 15px; }
.side-tab { position: absolute; left: 1368px; top: 700px; width: 17px; height: 37px; }
.side-tab.outer { left: 1487px; top: 728px; width: 19px; height: 41px; }
.mark { position: absolute; border: 4px solid #dc1e2c; }
.mark-more { left: 1068px; top: 34px; width: 62px; height: 32px; }
.mark-setup { left: 1005px; top: 153px; width: 89px; height: 34px; border-width: 5px; }
```

FILE: app.js
```js
const add = (parent, cls, text) => {
  const el = document.createElement('div');
  if (cls) el.className = cls;
  if (text) el.textContent = text;
  parent.appendChild(el);
  return el;
};

const files = document.getElementById('files');
const head = add(files, 'row h');
['File No.', 'Lot No.', 'Level', 'Expiration Date', 'Source', 'Mode', 'Test Panel', 'QC Sample ID', 'Communication ID', 'Editor', '', 'In Use']
  .forEach(t => add(head, '', t));

const lots = [['MB0922AL', 'Low'], ['MB0922AN', 'Medium'], ['MB0922AH', 'High']];
for (let n = 1; n <= 14; n++) {
  const [lot, level] = lots[n - 1] || ['', 'Medium'];
  const row = add(files, n === 5 ? 'row sel' : 'row');
  [String(n), lot, level, lot ? '10/11/2565' : '22/11/2565', 'Mindray', 'AL-WB', 'CD', lot, lot, lot ? 'service' : '', n > 7 ? '0/372' : '']
    .forEach((t, i) => {
      const cell = add(row, n === 5 && i === 8 ? 'edit' : '', t);
      if (n === 5 && i === 8) add(cell, 'caret');
    });
  const use = add(row, '');
  if (n > 7) add(use, 'check');
}

const params = [
  'WBC RBC HGB HCT MCV MCH MCHC PLT Neu# Lym# Mon# Eos# Bas# IMG#',
  'MPV PDW PCT P-LCC P-LCR IPF NRBC# NRBC% ESR HFC# HFC% PLT-I WBC-D InR#',
  'IME% NLR PLR Neu-X Neu-Y Neu-Z Lym-X Lym-Y Lym-Z Mon-X Mon-Y Mon-Z SRBC LRBC',
  'Neu-ZW Lym-XW Lym-YW Lym-ZW Mon-XW Mon-YW Mon-ZW PLT-H IPF-D RET%-D RET#-D IRF-D LFR-D MFR-D'
];
const limits = document.getElementById('limits');
params.forEach(list => {
  const grp = add(limits, 'grp');
  ['Para.', 'Target', 'Limit (#)', 'Mean', 'SD'].forEach(t => add(grp, 'gh', t));
  list.split(' ').forEach(p => {
    add(grp, p === 'WBC' ? 'wbc' : '', p);
    for (let i = 0; i < 4; i++) add(grp);
  });
});
```
